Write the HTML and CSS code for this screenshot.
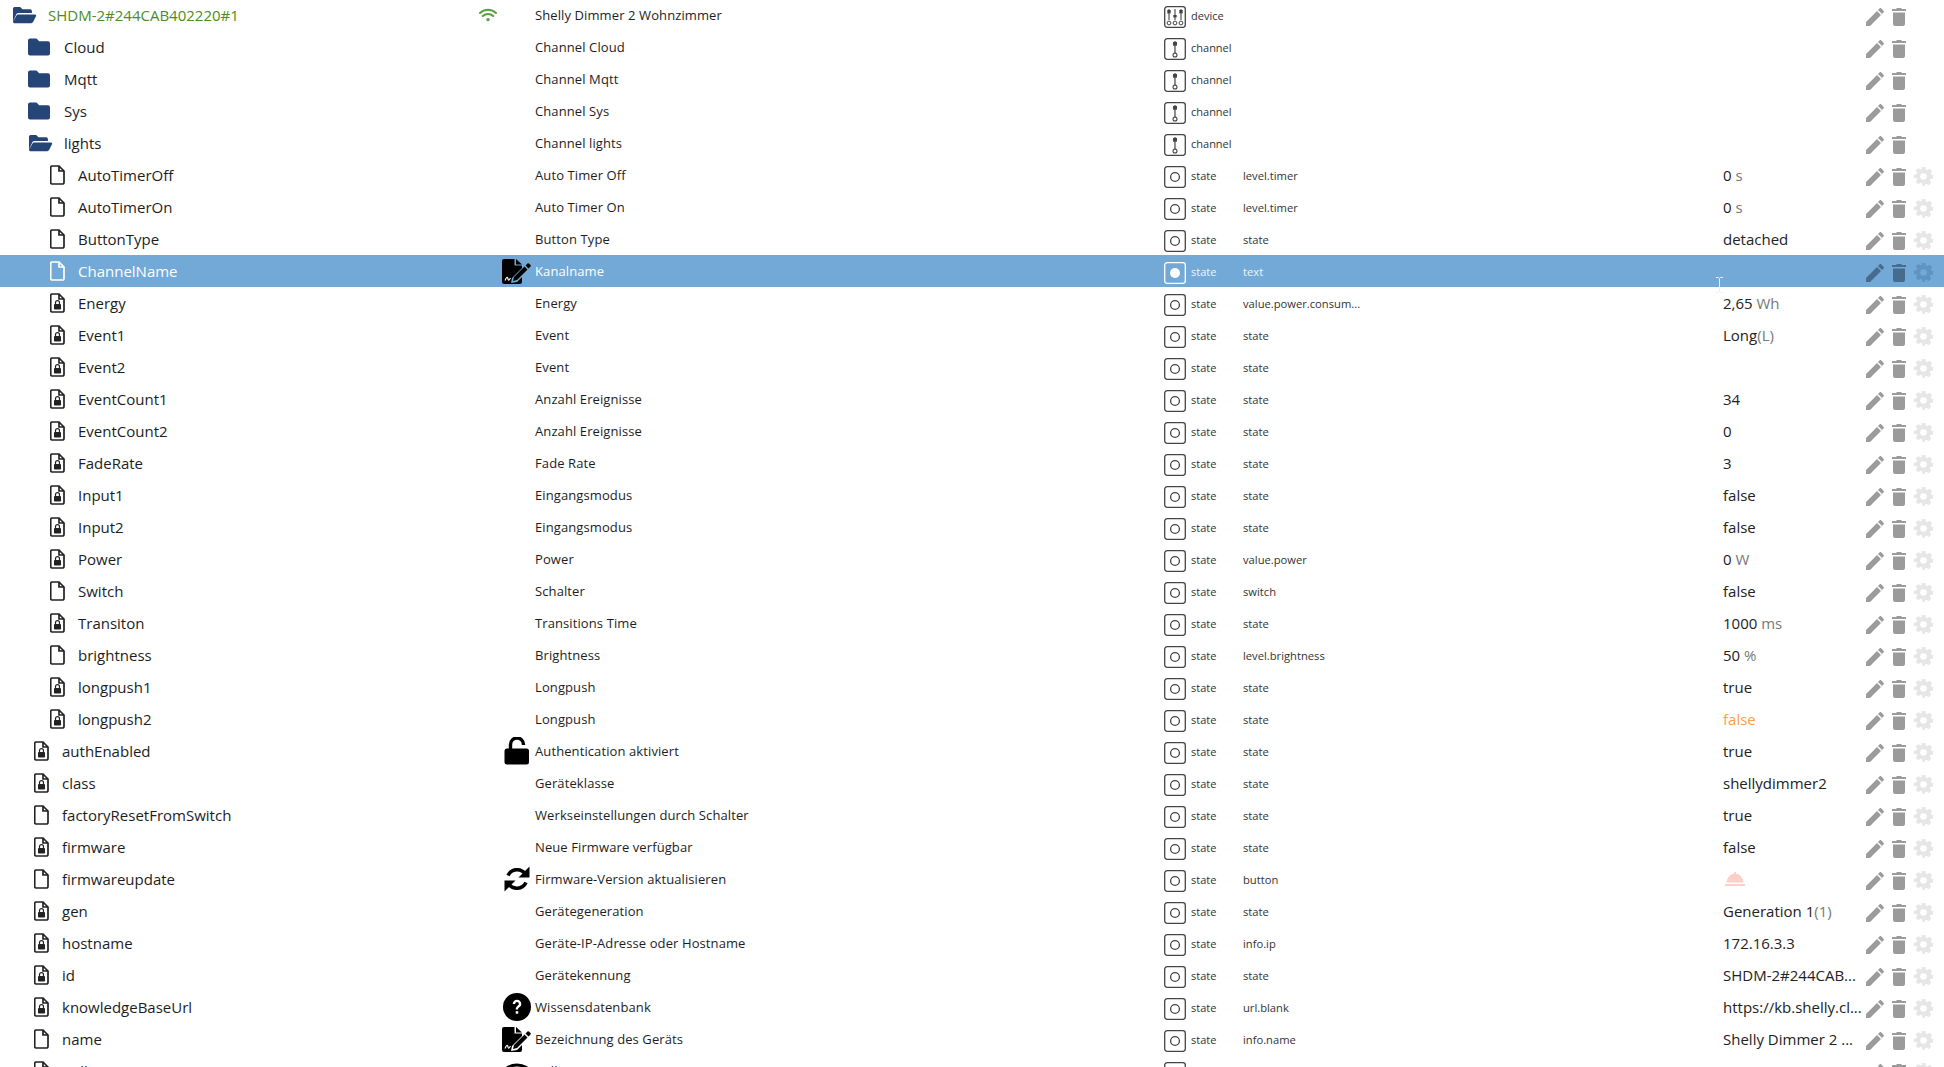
FILE: index.html
```html
<!DOCTYPE html>
<html lang="de">
<head>
<meta charset="utf-8">
<title>Objekte</title>
<link rel="stylesheet" href="styles.css">
</head>
<body>
<svg class="defs" width="0" height="0" aria-hidden="true">
  <defs>
    <symbol id="i-open" viewBox="0 0 24 18"><path d="M.5 16V2.600A1.600 1.600 0 0 1 2.100 1h5.600l2.300 2.300h7.800a1.600 1.600 0 0 1 1.600 1.600V7H6a2.500 2.500 0 0 0-2.200 1.300L.8 15zM5.600 8.400h16.900c.9 0 1.500.9 1.100 1.700l-3 6a2 2 0 0 1-1.800 1.100H1.700c-.9 0-1.400-.9-1-1.600l3.300-6.200a1.700 1.700 0 0 1 1.600-1z" fill="#254478"/></symbol>
    <symbol id="i-folder" viewBox="0 0 22 18"><path d="M2 .6h6.500L11.200 3.200H20a2 2 0 0 1 2 2V15.500a2 2 0 0 1-2 2H2a2 2 0 0 1-2-2V2.600a2 2 0 0 1 2-2z" fill="#254478"/></symbol>
    <symbol id="i-file" viewBox="0 0 15 20"><path d="M2.200 1h6.800l5 5v11.500a1.500 1.500 0 0 1-1.500 1.500h-10.300a1.500 1.500 0 0 1-1.500-1.500V2.500A1.500 1.500 0 0 1 2.200 1zM9 1v5h5" fill="none" stroke="currentColor" stroke-width="1.700"/></symbol>
    <symbol id="i-lockfile" viewBox="0 0 15 20"><path d="M2.200 1h6.800l5 5v11.500a1.500 1.500 0 0 1-1.500 1.500h-10.300a1.500 1.500 0 0 1-1.500-1.500V2.500A1.500 1.500 0 0 1 2.200 1zM9 1v5h5" fill="none" stroke="currentColor" stroke-width="1.700"/><path d="M5.500 11V9.700a2 2 0 0 1 4 0V11" fill="none" stroke="currentColor" stroke-width="1.200"/><rect x="4" y="11" width="7" height="5.500" rx=".8" fill="currentColor"/></symbol>
    <symbol id="i-wifi" viewBox="0 0 18 14"><path d="M1 5a11.500 11.500 0 0 1 16 0M3.800 8a7.500 7.500 0 0 1 10.400 0" fill="none" stroke="#5ba03c" stroke-width="2" stroke-linecap="round"/><circle cx="9" cy="11.600" r="1.700" fill="#5ba03c"/></symbol>
    <symbol id="i-sign" viewBox="0 0 29 25"><path d="M2 0H12.500V6.500H20V9L10 19 9 24 15 23 20 18V23A2 2 0 0 1 18 25H2A2 2 0 0 1 0 23V2A2 2 0 0 1 2 0zM14 0l6 5.500h-6z" fill="#000"/><path d="M3 21.500c1.500-3.500 2.500-4 3-1.500s1.300.5 2.500-1" fill="none" stroke="#fff" stroke-width="1.100"/><path d="M12 18 22.500 7.500 25.500 10.500 15 21 11 22zM23.500 6.500 25.500 4.500a1 1 0 0 1 1.400 0L28.500 6.100a1 1 0 0 1 0 1.400L26.500 9.500z" fill="#000"/></symbol>
    <symbol id="i-unlock" viewBox="0 0 26 28"><path d="M6.500 12V7.500a6.500 6.500 0 0 1 13 0V8" fill="none" stroke="#000" stroke-width="3.400"/><rect x=".5" y="11.500" width="24.500" height="16" rx="2.500" fill="#000"/></symbol>
    <symbol id="i-sync" viewBox="0 0 26 26"><path d="M21.500 8.500A10 10 0 0 0 4 9.500" fill="none" stroke="#000" stroke-width="3.600"/><path d="M25.500 .5v11h-11z" fill="#000"/><path d="M4.500 17.500a10 10 0 0 0 17.500-1" fill="none" stroke="#000" stroke-width="3.600"/><path d="M.5 25.500v-11h11z" fill="#000"/></symbol>
    <symbol id="i-help" viewBox="0 0 28 28"><circle cx="14" cy="14" r="14" fill="#000"/><path d="M9.700 11a4.300 4.300 0 0 1 8.600 0c0 3-3.300 3-3.300 5.500h-2.300c0-3.500 3.200-3.800 3.200-5.500a1.900 1.900 0 0 0-3.800 0z" fill="#fff"/><rect x="12.700" y="18.200" width="2.500" height="2.500" fill="#fff"/></symbol>
    <symbol id="i-arc" viewBox="0 0 28 28"><ellipse cx="14" cy="16" rx="12.500" ry="8" fill="none" stroke="#000" stroke-width="3"/></symbol>
    <symbol id="i-device" viewBox="0 0 22 22"><rect x=".7" y=".7" width="20.600" height="20.600" rx="2.500" fill="none" stroke="currentColor" stroke-width="1.300"/><path d="M5 3v11M11 3v11M17 3v11" stroke="currentColor" stroke-width="1.100"/><rect x="3.300" y="4" width="3.400" height="3.400" fill="currentColor"/><rect x="9.300" y="9" width="3.400" height="2.400" fill="currentColor"/><rect x="15.300" y="4" width="3.400" height="3.400" fill="currentColor"/><circle cx="5" cy="17" r="1.900" fill="none" stroke="currentColor" stroke-width="1"/><circle cx="11" cy="17" r="1.900" fill="none" stroke="currentColor" stroke-width="1"/><circle cx="17" cy="17" r="1.900" fill="none" stroke="currentColor" stroke-width="1"/></symbol>
    <symbol id="i-channel" viewBox="0 0 22 22"><rect x=".7" y=".7" width="20.600" height="20.600" rx="2.500" fill="none" stroke="currentColor" stroke-width="1.300"/><path d="M11 3v13" stroke="currentColor" stroke-width="1.200"/><rect x="9" y="4" width="4" height="3.600" fill="currentColor"/><circle cx="11" cy="17" r="2" fill="none" stroke="currentColor" stroke-width="1.100"/></symbol>
    <symbol id="i-state" viewBox="0 0 22 22"><rect x=".7" y=".7" width="20.600" height="20.600" rx="2.500" fill="none" stroke="currentColor" stroke-width="1.300"/><circle cx="11" cy="11" r="4.400" fill="none" stroke="currentColor" stroke-width="1.300"/></symbol>
    <symbol id="i-state-on" viewBox="0 0 22 22"><rect x=".7" y=".7" width="20.600" height="20.600" rx="2.500" fill="none" stroke="currentColor" stroke-width="1.300"/><circle cx="11" cy="11" r="5" fill="currentColor"/></symbol>
    <symbol id="i-pencil" viewBox="0 0 18 18"><path d="M0 18v-4L11 3l4 4L4 18zM12 2l1.700-1.700c.4-.4 1-.4 1.400 0l2.600 2.600c.4.400.4 1 0 1.400L16 6z" fill="currentColor"/></symbol>
    <symbol id="i-trash" viewBox="0 0 14 18"><path d="M5 0h4l1 1h4v2H0V1h4zM1 4.500h12V16a2 2 0 0 1-2 2H3a2 2 0 0 1-2-2z" fill="currentColor"/></symbol>
    <symbol id="i-gear" viewBox="0 0 20 20"><path d="M8 0h4l.5 2.800 1.500.6 2.300-1.600 2.800 2.800-1.600 2.300.6 1.500L20 8v4l-2.800.5-.6 1.500 1.600 2.300-2.800 2.800-2.300-1.600-1.500.6L11.100 20H8.900l-.5-2.800-1.500-.6-2.300 1.600-2.800-2.800 1.600-2.300-.6-1.500L0 12V8l2.800-.5.600-1.500-1.600-2.300L4.600 1l2.300 1.600 1.500-.6zM10 6.500a3.500 3.500 0 1 0 0 7 3.500 3.500 0 0 0 0-7z" fill="currentColor" fill-rule="evenodd"/></symbol>
    <symbol id="i-bell" viewBox="0 0 20 14"><rect x="9" y="0" width="2" height="2" fill="currentColor"/><path d="M1.500 10.500C2 5.500 5.500 1.500 10 1.500s8 4 8.500 9z" fill="currentColor"/><rect x="0" y="12" width="20" height="2" fill="currentColor"/></symbol>
  </defs>
</svg>
<main class="tree" id="tree"></main>
<svg class="cursor" viewBox="0 0 9 16" aria-hidden="true"><path d="M1 .5h2.500L4.500 1.500 5.500.5H8M4.500 1.500v13M1 15.500h2.500l1-1 1 1H8" fill="none" stroke="#f0f0f0" stroke-width="1"/></svg>
<script src="app.js"></script>
</body>
</html>
```

FILE: app.js
```js
var rows = [
  [0,'open','SHDM-2#244CAB402220#1','Shelly Dimmer 2 Wohnzimmer','device','','','wifi'],
  [1,'folder','Cloud','Channel Cloud','channel','',''],
  [1,'folder','Mqtt','Channel Mqtt','channel','',''],
  [1,'folder','Sys','Channel Sys','channel','',''],
  [1,'open','lights','Channel lights','channel','',''],
  [2,'file','AutoTimerOff','Auto Timer Off','state','level.timer','0 <u>s</u>'],
  [2,'file','AutoTimerOn','Auto Timer On','state','level.timer','0 <u>s</u>'],
  [2,'file','ButtonType','Button Type','state','state','detached'],
  [2,'file','ChannelName','Kanalname','state','text','','sign','sel'],
  [2,'lockfile','Energy','Energy','state','value.power.consum...','2,65 <u>Wh</u>'],
  [2,'lockfile','Event1','Event','state','state','Long<u>(L)</u>'],
  [2,'lockfile','Event2','Event','state','state',''],
  [2,'lockfile','EventCount1','Anzahl Ereignisse','state','state','34'],
  [2,'lockfile','EventCount2','Anzahl Ereignisse','state','state','0'],
  [2,'lockfile','FadeRate','Fade Rate','state','state','3'],
  [2,'lockfile','Input1','Eingangsmodus','state','state','false'],
  [2,'lockfile','Input2','Eingangsmodus','state','state','false'],
  [2,'lockfile','Power','Power','state','value.power','0 <u>W</u>'],
  [2,'file','Switch','Schalter','state','switch','false'],
  [2,'lockfile','Transiton','Transitions Time','state','state','1000 <u>ms</u>'],
  [2,'file','brightness','Brightness','state','level.brightness','50 <u>%</u>'],
  [2,'lockfile','longpush1','Longpush','state','state','true'],
  [2,'lockfile','longpush2','Longpush','state','state','<em>false</em>'],
  [3,'lockfile','authEnabled','Authentication aktiviert','state','state','true','unlock'],
  [3,'lockfile','class','Geräteklasse','state','state','shellydimmer2'],
  [3,'file','factoryResetFromSwitch','Werkseinstellungen durch Schalter','state','state','true'],
  [3,'lockfile','firmware','Neue Firmware verfügbar','state','state','false'],
  [3,'file','firmwareupdate','Firmware-Version aktualisieren','state','button','BELL','sync'],
  [3,'lockfile','gen','Gerätegeneration','state','state','Generation 1<u>(1)</u>'],
  [3,'lockfile','hostname','Geräte-IP-Adresse oder Hostname','state','info.ip','172.16.3.3'],
  [3,'lockfile','id','Gerätekennung','state','state','SHDM-2#244CAB...'],
  [3,'lockfile','knowledgeBaseUrl','Wissensdatenbank','state','url.blank','https://kb.shelly.cl...','help'],
  [3,'file','name','Bezeichnung des Geräts','state','info.name','Shelly Dimmer 2 ...','sign'],
  [3,'lockfile','poll','Pollgerät','state','','','arc']
];
function use(id, cls) {
  return '<svg class="' + cls + '"><use href="#i-' + id + '"/></svg>';
}
document.getElementById('tree').innerHTML = rows.map(function (r) {
  var isState = r[4] === 'state';
  var kindIcon = isState ? (r[8] === 'sel' ? 'state-on' : 'state') : r[4];
  var value = r[6] === 'BELL' ? use('bell', 'ic-bell') : r[6];
  return '<div class="row depth-' + r[0] + (r[8] ? ' ' + r[8] : '') + (r[0] === 0 ? ' root' : '') + '">' +
    '<div class="c-name">' + use(r[1], 'ic-' + r[1]) + '<span class="name">' + r[2] + '</span></div>' +
    '<div class="c-mark">' + (r[7] ? use(r[7], 'ic-' + r[7]) : '') + '</div>' +
    '<div class="c-title">' + r[3] + '</div>' +
    '<div class="c-kind">' + use(kindIcon, 'ic-kind') + '<span>' + r[4] + '</span></div>' +
    '<div class="c-role">' + r[5] + '</div>' +
    '<div class="c-value">' + value + '</div>' +
    '<div class="c-actions">' + use('pencil', 'ic-pencil') + use('trash', 'ic-trash') +
      (isState ? use('gear', 'ic-gear') : '') + '</div>' +
    '</div>';
}).join('');
```

FILE: styles.css
```css
* { box-sizing: border-box; }
html, body { margin: 0; height: 100%; overflow: hidden; background: #fff; }
body { font-family: "Open Sans", "Noto Sans", sans-serif; color: #1d1d1d; }
.defs { display: block; height: 0; }
.tree { margin-top: -1px; }
.row {
  display: grid;
  grid-template-columns: 498px 37px 629px 79px 480px 143px 78px;
  height: 32px;
  align-items: center;
}
.c-name { display: flex; align-items: center; font-size: 15px; min-width: 0; white-space: nowrap; }
.depth-0 .c-name { padding-left: 12px; }
.depth-1 .c-name { padding-left: 28px; }
.depth-2 .c-name { padding-left: 50px; }
.depth-3 .c-name { padding-left: 34px; }
.root .name { color: #4c8c24; }
.ic-open { width: 25px; height: 18px; margin-right: 11px; flex: none; }
.ic-folder { width: 22px; height: 18px; margin-right: 14px; flex: none; }
.ic-file, .ic-lockfile { width: 15px; height: 20px; margin-right: 13px; color: #222; flex: none; }
.c-mark { display: flex; align-items: center; justify-content: center; height: 32px; }
.c-mark svg { display: block; flex: none; }
.ic-wifi { width: 18px; height: 14px; margin-left: -57px; }
.ic-sign { width: 29px; height: 25px; }
.ic-unlock { width: 26px; height: 28px; }
.ic-sync { width: 26px; height: 26px; }
.ic-help, .ic-arc { width: 28px; height: 28px; }
.c-title { font-size: 13px; white-space: nowrap; letter-spacing: .1px; }
.c-kind { display: flex; align-items: center; font-size: 11px; color: #333; }
.ic-kind { width: 22px; height: 22px; margin: 3.500px 5px 0 0; color: #444; flex: none; }
.c-role { font-size: 11.200px; color: #333; white-space: nowrap; }
.c-value { font-size: 15px; white-space: nowrap; color: #222; padding-right: 4px; }
.c-value u { text-decoration: none; color: #777; }
.c-value em { font-style: normal; color: #f5a14a; }
.ic-bell { width: 20px; height: 14px; color: #fccfc9; display: block; margin-left: 2px; }
.c-actions { display: flex; align-items: center; height: 32px; padding-top: 3px; color: #9b9b9b; }
.ic-pencil { width: 18px; height: 18px; margin-right: 8px; flex: none; }
.ic-trash { width: 14px; height: 18px; margin-right: 8px; flex: none; }
.ic-gear { width: 19px; height: 19px; color: #e6e6e6; flex: none; }
.sel { background: #73a9d7; color: #fff; }
.sel .c-kind, .sel .c-role, .sel .ic-kind, .sel .ic-file { color: #fff; }
.sel .c-kind span, .sel .c-role { color: #eef5fb; }
.sel .c-actions { color: #466b8c; }
.sel .ic-gear { color: #5f93c0; }
.cursor { position: absolute; left: 1715px; top: 277px; width: 9px; height: 16px; }
```
